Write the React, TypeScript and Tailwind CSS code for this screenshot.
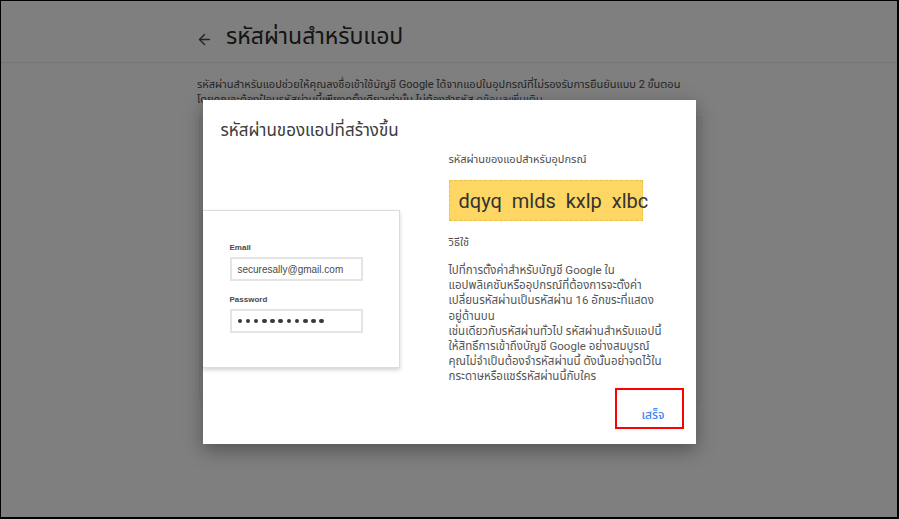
import { ArrowLeft } from "lucide-react";

const thai = "font-['Roboto','Noto_Sans_Thai','Noto_Sans','DejaVu_Sans',sans-serif]";

const howTo = [
    "ไปที่การตั้งค่าสำหรับบัญชี Google ใน",
    "แอปพลิเคชันหรืออุปกรณ์ที่ต้องการจะตั้งค่า",
    "เปลี่ยนรหัสผ่านเป็นรหัสผ่าน 16 อักขระที่แสดง",
    "อยู่ด้านบน",
    "เช่นเดียวกับรหัสผ่านทั่วไป รหัสผ่านสำหรับแอปนี้",
    "ให้สิทธิ์การเข้าถึงบัญชี Google อย่างสมบูรณ์",
    "คุณไม่จำเป็นต้องจำรหัสผ่านนี้ ดังนั้นอย่าจดไว้ใน",
    "กระดาษหรือแชร์รหัสผ่านนี้กับใคร",
];

function Illustration() {
    return (
        <div className="mt-[68px] w-[197px] h-[158px] bg-white border border-[#dcdcdc] border-l-0 shadow-[0_2px_4px_rgba(0,0,0,0.18)] pl-[27px] pt-[32px] font-['Liberation_Sans',sans-serif]">
            <div className="text-[8px] font-bold text-[#4a4a4a] leading-[10px]">Email</div>
            <div className="mt-[4px] w-[133px] h-[24px] border-2 border-[#e4e4e4] flex items-center pl-[6px] text-[10px] text-[#4a4a4a]">
                securesally@gmail.com
            </div>
            <div className="mt-[14px] text-[8px] font-bold text-[#4a4a4a] leading-[10px]">Password</div>
            <div className="mt-[4px] w-[133px] h-[24px] border-2 border-[#e4e4e4] flex items-center gap-[3.6px] pl-[6px]">
                {Array.from({ length: 11 }).map((_, i) => (
                    <span key={i} className="size-[4.6px] rounded-full bg-[#3a3a3a]" />
                ))}
            </div>
        </div>
    );
}

export default function App() {
    return (
        <div className={`relative w-[899px] h-[519px] overflow-hidden bg-white border-t border-l border-r-2 border-b-2 border-black ${thai}`}>
            {/* page beneath the dialog */}
            <div className="h-[62px] border-b border-[#ececec] flex items-end pb-[9px] pl-[195px] gap-[13px]">
                <ArrowLeft className="size-[17px] text-[#4a4a4a] mb-[5px]" strokeWidth={2} />
                <h1 className="text-[23px] leading-[32px] text-[#2a2a2a]">รหัสผ่านสำหรับแอป</h1>
            </div>
            <div className="pl-[196px] pt-[14px] text-[11px] leading-[15px] text-[#4a4a4a] w-[700px]">
                <p>รหัสผ่านสำหรับแอปช่วยให้คุณลงชื่อเข้าใช้บัญชี Google ได้จากแอปในอุปกรณ์ที่ไม่รองรับการยืนยันแบบ 2 ขั้นตอน</p>
                <p>โดยคุณจะต้องป้อนรหัสผ่านนี้เพียงครั้งเดียวเท่านั้น ไม่ต้องจำรหัส <span className="text-[#1a73e8]">ดูข้อมูลเพิ่มเติม</span></p>
            </div>
            <div className="ml-[198px] mt-[10px] w-[503px] h-[287px] rounded-b-[8px] border border-[#f1f1f1]" />

            {/* scrim + dialog */}
            <div className="absolute inset-0 bg-black/50 flex justify-center pt-[99px]">
                <div className="w-[493px] h-[344px] bg-white shadow-[0_6px_18px_rgba(0,0,0,0.35)] flex flex-col">
                    <h2 className="pl-[18px] pt-[18px] text-[17px] leading-[24px] text-[#3c3c3c]">รหัสผ่านของแอปที่สร้างขึ้น</h2>
                    <div className="flex">
                        <div className="w-[246px]">
                            <Illustration />
                        </div>
                        <div className="w-[236px] pt-[10px] text-[#4d4d4d]">
                            <p className="text-[11px] leading-[16px]">รหัสผ่านของแอปสำหรับอุปกรณ์</p>
                            <div className="mt-[12px] w-[194px] h-[41px] bg-[#fdd663] border border-dashed border-[#e8c24a] flex items-center pl-[9px] text-[20px] text-[#333] font-['Roboto',sans-serif] whitespace-pre">
                                dqyq  mlds  kxlp  xlbc
                            </div>
                            <p className="mt-[14px] text-[11px] leading-[16px]">วิธีใช้</p>
                            <div className="mt-[12px] text-[11.5px] leading-[15.2px] text-[#555]">
                                {howTo.map((line) => (
                                    <p key={line} className="whitespace-nowrap">{line}</p>
                                ))}
                            </div>
                        </div>
                    </div>
                    <div className="mt-auto mb-[15px] flex justify-end pr-[12px]">
                        <div className="w-[69px] h-[41px] border-2 border-[#ff0000] flex items-end justify-center pl-[8px] pb-[4px]">
                            <span className="text-[12px] leading-[16px] text-[#4285f4] font-medium">เสร็จ</span>
                        </div>
                    </div>
                </div>
            </div>
        </div>
    );
}
